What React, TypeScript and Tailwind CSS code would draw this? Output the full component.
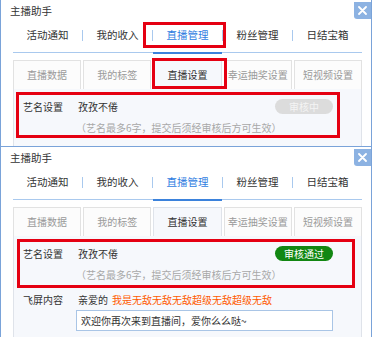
import React from 'react';

const TABS = ['活动通知', '我的收入', '直播管理', '粉丝管理', '日结宝箱'];
const SUB_TABS = ['直播数据', '我的标签', '直播设置', '幸运抽奖设置', '短视频设置'];

interface WindowProps {
  approved: boolean;
  cropped?: boolean;
}

function RedBox({ className }: { className: string }) {
  return <div className={`pointer-events-none absolute border-[3px] border-[#e50012] ${className}`} />;
}

function AssistantWindow({ approved, cropped }: WindowProps) {
  return (
    <div
      className={`relative w-[372px] border-x border-[#7aa3d9] bg-white text-[10px] text-[#333] ${
        cropped ? 'h-[146px] overflow-hidden' : 'h-[191px] border-t'
      }`}
    >
      {/* Title bar */}
      <div className="h-[22px] pl-[9px] text-[10.5px] leading-[22px]">主播助手</div>
      <button className="absolute right-0 top-[2px] flex h-[17px] w-[17px] items-center justify-center rounded-bl-[3px] bg-[#8cb2e2]">
        <svg width="9" height="9" viewBox="0 0 9 9">
          <path d="M1 1L8 8M8 1L1 8" stroke="white" strokeWidth="1.8" strokeLinecap="round" />
        </svg>
      </button>

      {/* Main tabs */}
      <div className="ml-[12px] mr-[9px] flex h-[31px] border-b border-[#a9c9ee]">
        {TABS.map((t, i) => (
          <React.Fragment key={t}>
            {i > 0 && <div className="mt-[8px] h-[11px] w-px bg-[#a9c9ee]" />}
            <div
              className={`relative flex-1 text-center text-[10.5px] leading-[26px] ${
                t === '直播管理' ? 'text-[#2f7de1]' : 'text-[#333]'
              }`}
            >
              {t}
              {t === '直播管理' && <div className="absolute -bottom-[2px] left-0 right-0 h-[2px] bg-[#3b82dc]" />}
            </div>
          </React.Fragment>
        ))}
      </div>

      {/* Sub tabs */}
      <div className="ml-[12px] mr-[9px] mt-[7px] flex gap-[2px]">
        {SUB_TABS.map((t) => (
          <div
            key={t}
            className={`flex-1 border border-b-0 text-center leading-[28px] ${
              t === '直播设置'
                ? 'border-[#dfe3ea] bg-[#f6f8fc] text-[#333]'
                : 'border-[#e2e2e2] bg-[#fcfcfc] text-[#9a9a9a]'
            }`}
          >
            {t}
          </div>
        ))}
      </div>

      {/* Panel */}
      <div className="ml-[12px] mr-[9px] h-[110px] border border-t-0 border-[#dfe3ea] bg-[#f6f8fc] pl-[9px] pt-[9px]">
        <div className="flex h-[16px] items-center">
          <span className="w-[55px]">艺名设置</span>
          <span>孜孜不倦</span>
          <div className="flex-1" />
          {approved ? (
            <span className="mr-[28px] flex h-[15px] w-[58px] items-center justify-center rounded-full bg-[#128712] text-white">
              审核通过
            </span>
          ) : (
            <span className="mr-[28px] flex h-[15px] w-[58px] items-center justify-center rounded-full bg-[#dcdcdc] text-[#f4f4f4]">
              审核中
            </span>
          )}
        </div>
        <div className="ml-[53px] mt-[7px] h-[14px] leading-[14px] text-[#a8a8a8]">（艺名最多6字，提交后须经审核后方可生效）</div>
        {!cropped && (
          <>
            <div className="mt-[10px] flex h-[14px] items-center">
              <span className="w-[55px]">飞屏内容</span>
              <span>亲爱的</span>
              <span className="ml-[4px] text-[#ff5a00]">我是无敌无敌无敌超级无敌超级无敌</span>
            </div>
            <div className="ml-[53px] mt-[4px] flex h-[21px] w-[257px] items-center border border-[#a9c5e6] bg-white pl-[4px] text-[#333]">
              欢迎你再次来到直播间，爱你么么哒~
            </div>
          </>
        )}
      </div>

      {approved ? (
        <RedBox className="left-[16px] top-[92px] h-[49px] w-[338px]" />
      ) : (
        <>
          <RedBox className="left-[142px] top-[22px] h-[26px] w-[83px]" />
          <RedBox className="left-[151px] top-[58px] h-[31px] w-[75px]" />
          <RedBox className="left-[15px] top-[92px] h-[46px] w-[324px]" />
        </>
      )}
    </div>
  );
}

export default function App() {
  return (
    <div className="w-[373px] bg-white" style={{ fontFamily: '"Noto Sans CJK SC", "Noto Sans", sans-serif' }}>
      <AssistantWindow approved={false} cropped />
      <AssistantWindow approved />
    </div>
  );
}
